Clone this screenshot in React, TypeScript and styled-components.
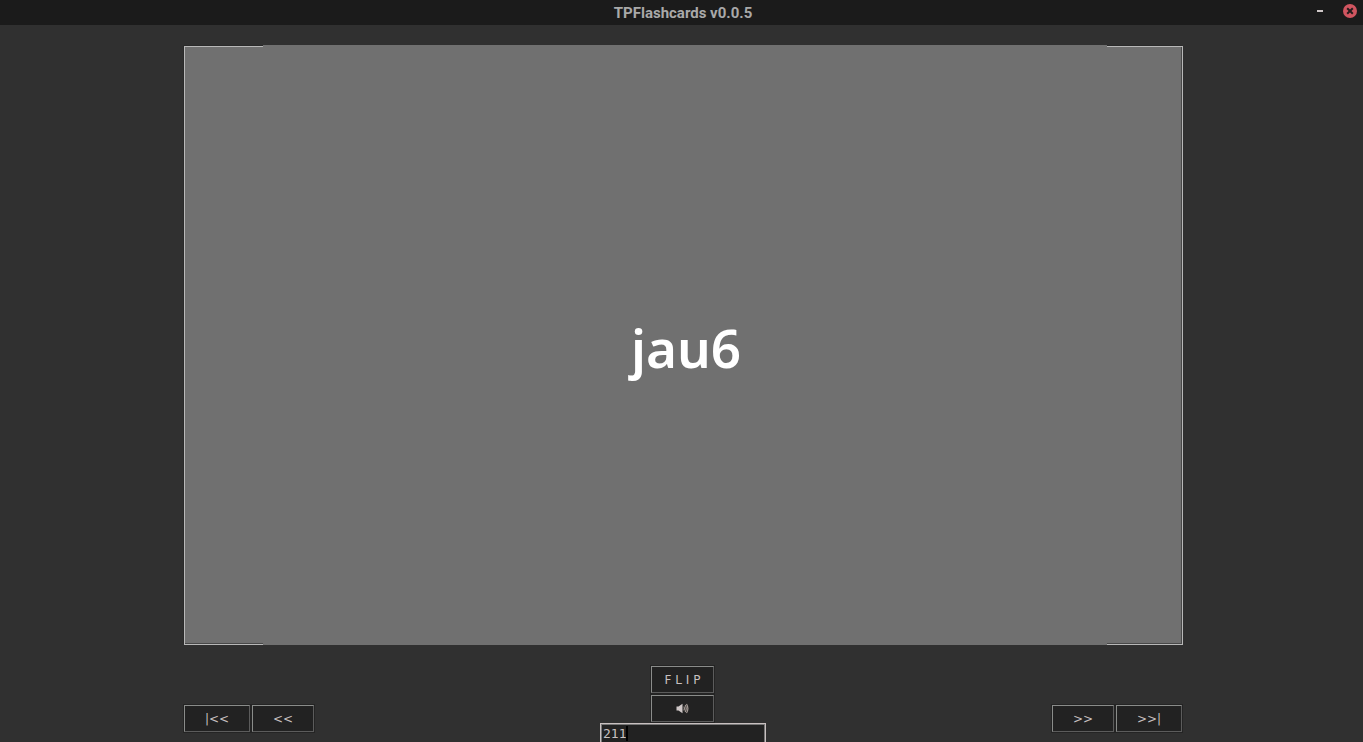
import React, { useState } from "react";
import styled, { createGlobalStyle } from "styled-components";

const GlobalStyle = createGlobalStyle`
  * { box-sizing: border-box; }
  body {
    margin: 0;
    background: #303030;
    overflow: hidden;
    font-family: "DejaVu Sans", sans-serif;
    font-size: 12px;
    color: #c8c0c0;
  }
`;

const Window = styled.div`
  height: 100vh;
  overflow: hidden;
`;

const TitleBar = styled.header`
  display: grid;
  grid-template-columns: 1fr auto 1fr;
  align-items: center;
  height: 25px;
  padding: 0 6px 0 9px;
  background: #1b1b1b;
`;

const Title = styled.h1`
  grid-column: 2;
  margin: 0;
  font: 700 15px/26px Roboto, sans-serif;
  color: #a9a9a9;
`;

const WindowControls = styled.div`
  display: flex;
  justify-content: flex-end;
  align-items: center;
  gap: 12px;
  height: 22px;
  align-self: start;
`;

const ControlButton = styled.button`
  display: flex;
  padding: 0;
  border: 0;
  background: none;
`;

const Stage = styled.main`
  display: flex;
  justify-content: center;
  padding: 20px 0 0 3px;
`;

const Deck = styled.div`
  width: 1000px;
  max-width: 100%;
`;

const Card = styled.section`
  display: flex;
  height: 599px;
  margin: 1px 0 0 1px;
  padding: 0 75px 0 78px;
  border: 1px solid #b8b8b8;
  background: #707070;
  box-shadow: inset -1px -1px #484848, -1px -1px #2a2a2a;
`;

const CardText = styled.div`
  flex: 1;
  display: flex;
  align-items: center;
  justify-content: center;
  margin: -2px 0 -1px;
  padding: 5px 0 0 2px;
  background: #707070;
  color: #fff;
  font: 600 53px/80px "Noto Sans", sans-serif;
`;

const Controls = styled.div`
  display: grid;
  grid-template-columns: 1fr auto 1fr;
  align-items: start;
  padding-top: 20px;
`;

const Nav = styled.nav<{ $end?: boolean }>`
  display: flex;
  justify-content: ${(p) => (p.$end ? "flex-end" : "flex-start")};
  padding-top: 39px;
`;

const Center = styled.div`
  display: flex;
  flex-direction: column;
  align-items: center;
`;

const ButtonStack = styled.div`
  display: flex;
  flex-direction: column;
  padding-right: 1px;
`;

const Button = styled.button<{ $width: number }>`
  display: flex;
  align-items: center;
  justify-content: center;
  width: ${(p) => p.$width - 2}px;
  height: 27px;
  margin: 1px;
  padding: 0;
  border: 1px solid;
  border-color: #8a8c8a #5c5c5c #5c5c5c #8a8c8a;
  background: #222;
  box-shadow: 0 0 0 1px #242424;
  color: inherit;
  font: inherit;
  white-space: pre;
`;

const NumberField = styled.div`
  position: relative;
  font: 13px/17px "DejaVu Sans Mono", monospace;
`;

const CardNumber = styled.input`
  display: block;
  width: 166px;
  height: 21px;
  padding: 0 2px;
  border: 1px solid #c8c0c0;
  box-shadow: inset 1px 1px #777, inset -1px 0 #777;
  background: #222;
  color: inherit;
  font: inherit;
  outline: none;
`;

const Caret = styled.span`
  position: absolute;
  top: 3px;
  left: 3px;
  height: 15px;
  border-right: 2px solid #000;
  pointer-events: none;
`;

export default function App() {
  const [number, setNumber] = useState("211");
  return (
    <Window>
      <GlobalStyle />
      <TitleBar>
        <Title>TPFlashcards v0.0.5</Title>
        <WindowControls>
          <ControlButton aria-label="Minimize">
            <svg width="22" height="14" viewBox="0 0 22 14">
              <rect x="8" y="6" width="6" height="2" fill="#d0c8c8" />
            </svg>
          </ControlButton>
          <ControlButton aria-label="Close">
            <svg width="14" height="14" viewBox="0 0 14 14">
              <circle cx="7" cy="7" r="7" fill="#d05560" />
              <path d="M4.2 4.2l5.6 5.6M9.8 4.2l-5.6 5.6" stroke="#241c1d" strokeWidth="2" />
            </svg>
          </ControlButton>
        </WindowControls>
      </TitleBar>
      <Stage>
        <Deck>
          <Card>
            <CardText>jau6</CardText>
          </Card>
          <Controls>
            <Nav aria-label="Previous cards">
              <Button $width={68}>{"|<<"}</Button>
              <Button $width={64}>{"<<"}</Button>
            </Nav>
            <Center>
              <ButtonStack>
                <Button $width={65}>F L I P</Button>
                <Button $width={65} aria-label="Play sound">
                  <svg width="13" height="11" viewBox="0 0 13 11">
                    <path d="M.5 3.5h2L6.5 .8v9.4L2.5 7.5h-2z" fill="#d0c8c8" />
                    <path
                      d="M7.8 3.5q1.2 2 0 4M9.2 2q2 3.5 0 7M10.5 1q2.8 4.5 0 9"
                      fill="none"
                      stroke="#a59b96"
                      strokeWidth="1.2"
                    />
                  </svg>
                </Button>
              </ButtonStack>
              <NumberField>
                <CardNumber
                  aria-label="Card number"
                  value={number}
                  onChange={(e) => setNumber(e.target.value)}
                />
                <Caret style={{ width: `calc(${number.length}ch + 2px)` }} />
              </NumberField>
            </Center>
            <Nav $end aria-label="Next cards">
              <Button $width={64}>{">>"}</Button>
              <Button $width={68}>{">>|"}</Button>
            </Nav>
          </Controls>
        </Deck>
      </Stage>
    </Window>
  );
}
